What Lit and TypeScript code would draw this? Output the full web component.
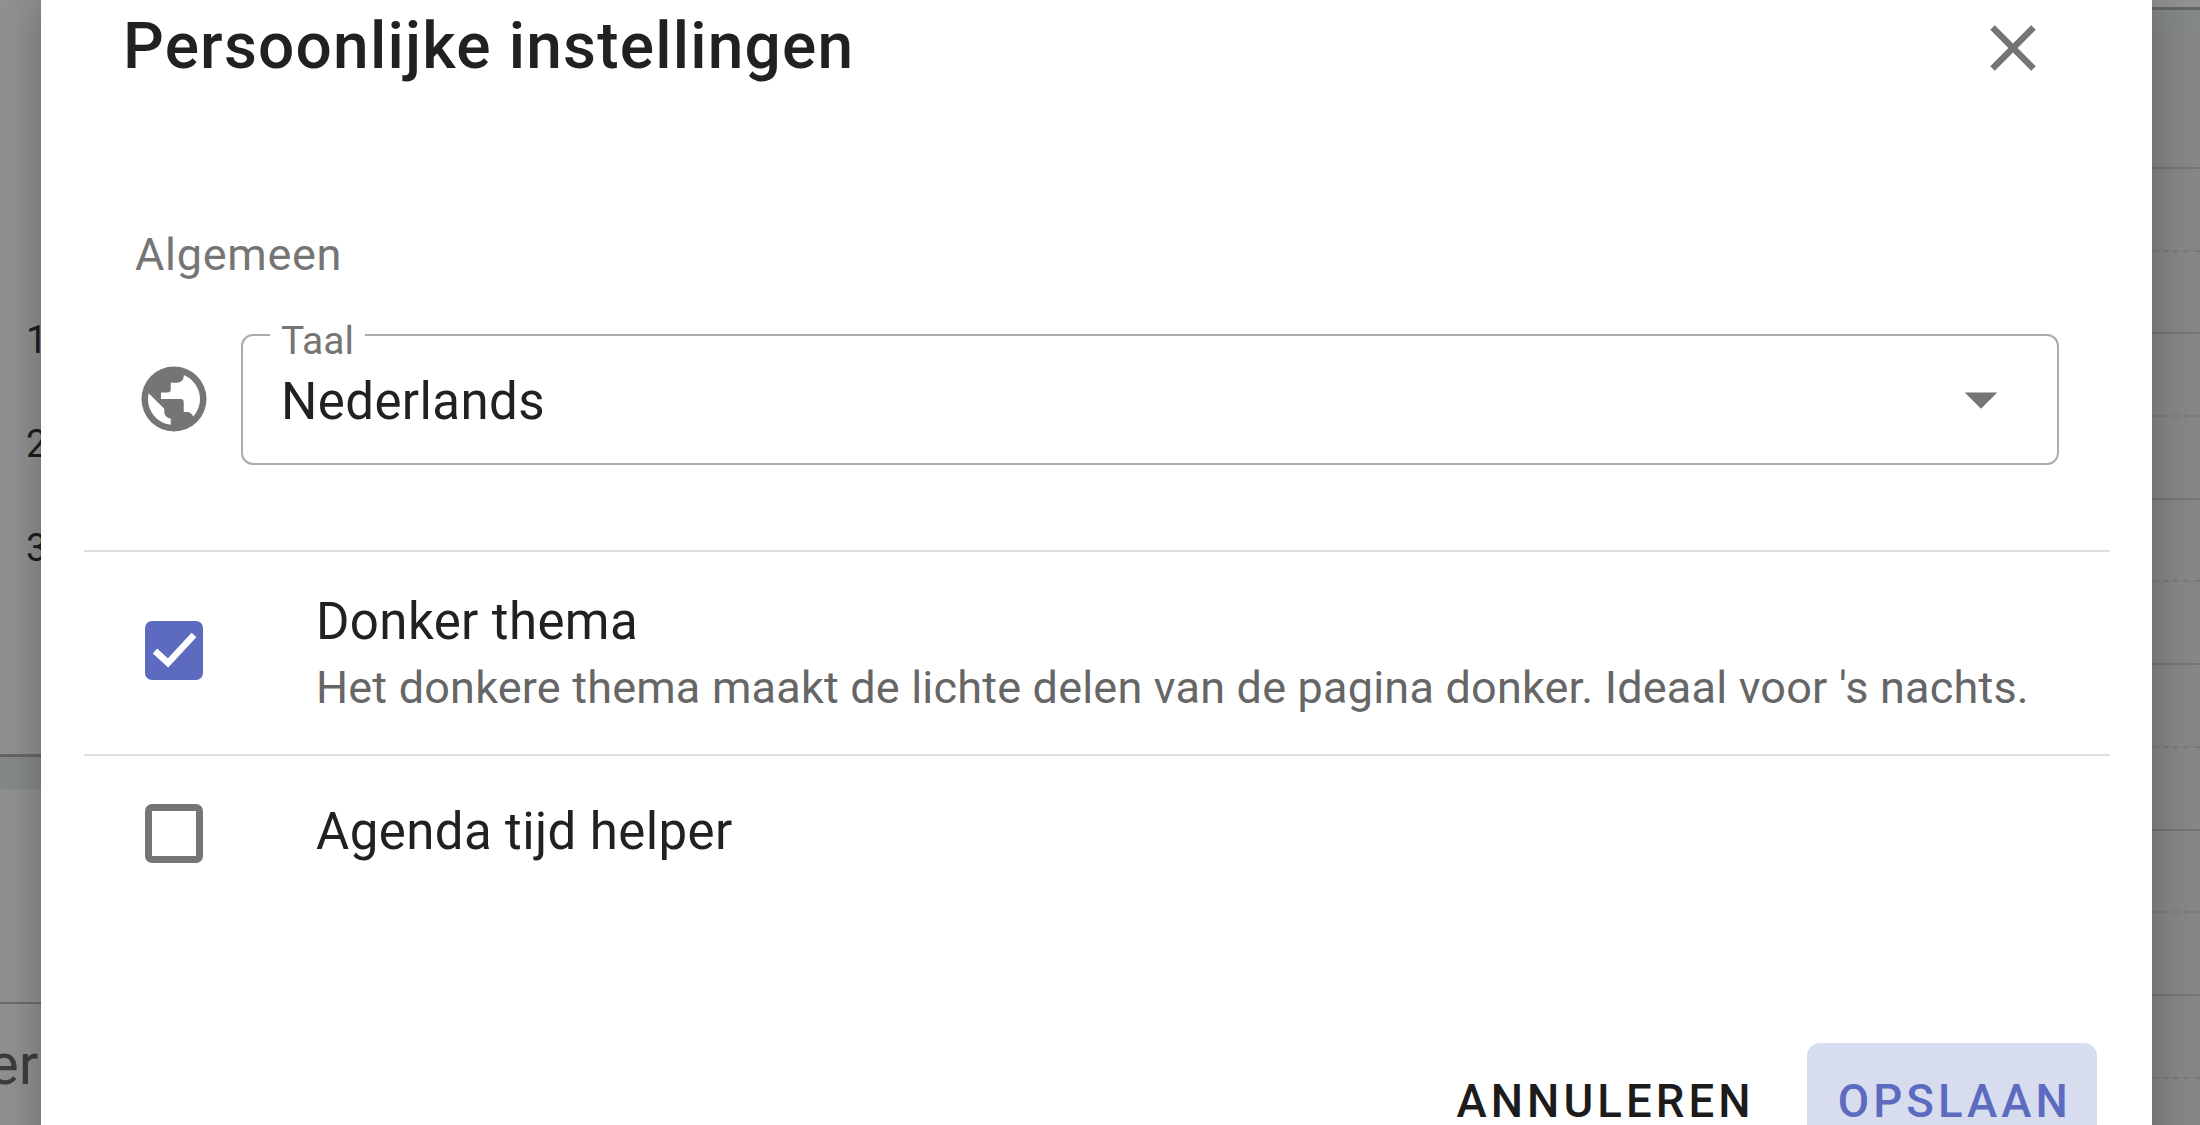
import { LitElement, html, css } from "lit";
import { customElement } from "lit/decorators.js";

@customElement("app-root")
export class AppRoot extends LitElement {
  static styles = css`
    :host {
      display: block;
      position: relative;
      width: 2200px;
      height: 1125px;
      overflow: hidden;
      background: #8a8a8a;
      font-family: Roboto, "Noto Sans", sans-serif;
    }
    .backdrop { display: flex; height: 1125px; }
    .left { width: 41px; background: #919191; overflow: hidden; display: flex; flex-direction: column; }
    .hours { padding-top: 288px; height: 757px; box-sizing: border-box; flex: none; border-bottom: 3px solid #666; }
    .hour { height: 104px; line-height: 104px; font-size: 38px; color: #1d1d1d; padding-left: 26px; }
    .band { height: 32px; flex: none; background: #858a87; }
    .spacer-left { height: 213px; flex: none; border-bottom: 2px solid #6c6c6c; }
    .cut { font-size: 58px; line-height: 120px; color: #3d3d3d; margin-left: -12px; white-space: nowrap; }
    .middle { flex: 1; }
    .right { width: 48px; background: #878787; display: flex; flex-direction: column; overflow: hidden; }
    .head { height: 7px; flex: none; background: #929292; border-bottom: 3px solid #666; }
    .head-band { height: 20px; flex: none; background: #848886; }
    .first { height: 137px; flex: none; border-bottom: 2px solid #757575; }
    .half { height: 80.7px; flex: none; border-bottom: 2px dashed #7a7a7a; }
    .full { height: 80.7px; flex: none; border-bottom: 2px solid #757575; }

    .modal {
      position: absolute;
      left: 41px;
      top: 0;
      width: 2111px;
      background: #fff;
      box-shadow: 0 0 42px rgba(0, 0, 0, 0.28);
      display: flex;
      flex-direction: column;
      color: #212121;
    }
    .title-row { display: flex; justify-content: space-between; align-items: center; height: 94px; padding: 0 100px 0 82px; }
    .title { font-size: 64px; font-weight: 500; letter-spacing: 1.2px; line-height: 92px; }
    .close { margin-top: 2px; }
    svg { display: block; flex: none; }
    .icon-fill { fill: #757575; }
    .section { font-size: 45px; color: #757575; padding: 129px 0 0 94px; line-height: 64px; letter-spacing: 0.7px; }
    .select-row { display: flex; align-items: flex-start; gap: 28px; padding: 21px 93px 0 94px; }
    .globe { margin-top: 52px; }
    fieldset {
      flex: 1;
      margin: 0;
      padding: 0;
      height: 157px;
      box-sizing: border-box;
      border: 2px solid #ababab;
      border-radius: 12px;
      min-width: 0;
    }
    legend { margin-left: 27px; padding: 14px 11px 0; font-size: 39px; line-height: 39px; color: #757575; }
    .value { display: flex; align-items: center; justify-content: space-between; padding: 0 37px 0 38px; height: 81px; font-size: 51px; color: #212121; letter-spacing: 0.4px; }
    .arrow { margin-bottom: 6px; }
    .divider { height: 2px; background: #e0e0e0; margin: 0 42px 0 43px; }
    .divider.one { margin-top: 85px; }
    .option { display: flex; padding-left: 104px; gap: 113px; }
    .option.first-option { height: 202px; align-items: center; }
    .option.second-option { height: 287px; padding-top: 48px; box-sizing: border-box; align-items: flex-start; }
    .box { width: 58px; height: 59px; box-sizing: border-box; border-radius: 7px; flex: none; }
    .box.on { background: #5c6bc0; margin-bottom: 6px; }
    .box.off { border: 7px solid #757575; }
    .texts { padding-top: 3px; }
    .label { font-size: 51px; line-height: 64px; color: #212121; letter-spacing: 0.4px; }
    .second-option .label { margin-top: -4px; }
    .desc { font-size: 45px; line-height: 62px; color: #666; letter-spacing: 0.2px; white-space: nowrap; margin-top: 3px; }
    .actions { display: flex; justify-content: flex-end; align-items: center; padding-right: 55px; gap: 27px; }
    .btn { font-size: 45.5px; font-weight: 500; letter-spacing: 4.1px; height: 117px; line-height: 117px; padding: 0 25px 0 31px; border-radius: 13px; }
    .btn.ghost { color: #1c1c1c; }
    .btn.primary { color: #5c6bc0; background: #d7dcee; }
  `;

  render() {
    const rows = [0, 1, 2, 3, 4, 5];
    return html`
      <div class="backdrop">
        <div class="left">
          <div class="hours">
            ${["1", "2", "3"].map((h) => html`<div class="hour">${h}</div>`)}
          </div>
          <div class="band"></div>
          <div class="spacer-left"></div>
          <div class="cut">er</div>
        </div>
        <div class="middle"></div>
        <div class="right">
          <div class="head"></div>
          <div class="head-band"></div>
          <div class="first"></div>
          ${rows.map(() => html`<div class="half"></div><div class="full"></div>`)}
        </div>
      </div>

      <div class="modal">
        <div class="title-row">
          <div class="title">Persoonlijke instellingen</div>
          <svg class="close" width="78" height="78" viewBox="0 0 24 24"><path class="icon-fill" d="M19 6.41 17.59 5 12 10.59 6.41 5 5 6.41 10.59 12 5 17.59 6.41 19 12 13.41 17.59 19 19 17.59 13.41 12z"/></svg>
        </div>
        <div class="section">Algemeen</div>
        <div class="select-row">
          <svg class="globe" width="78" height="78" viewBox="0 0 24 24"><path class="icon-fill" d="M17.9 17.39C17.64 16.59 16.89 16 16 16h-1v-3a1 1 0 0 0-1-1H8v-2h2a1 1 0 0 0 1-1V7h2a2 2 0 0 0 2-2v-.41C17.93 5.77 20 8.64 20 12c0 2.08-.8 3.97-2.1 5.39M11 19.93C7.05 19.44 4 16.08 4 12c0-.62.08-1.22.21-1.79L9 15v1a2 2 0 0 0 2 2M12 2A10 10 0 0 0 2 12a10 10 0 0 0 10 10 10 10 0 0 0 10-10A10 10 0 0 0 12 2z"/></svg>
          <fieldset>
            <legend>Taal</legend>
            <div class="value">
              <span>Nederlands</span>
              <svg class="arrow" width="78" height="78" viewBox="0 0 24 24"><path class="icon-fill" d="M7 10l5 5 5-5z"/></svg>
            </div>
          </fieldset>
        </div>
        <div class="divider one"></div>
        <div class="option first-option">
          <div class="box on">
            <svg width="58" height="59" viewBox="0 0 58 59"><path fill="none" stroke="#fff" stroke-width="6.5" d="M10 30 23 42 49 14"/></svg>
          </div>
          <div class="texts">
            <div class="label">Donker thema</div>
            <div class="desc">Het donkere thema maakt de lichte delen van de pagina donker. Ideaal voor 's nachts.</div>
          </div>
        </div>
        <div class="divider"></div>
        <div class="option second-option">
          <div class="box off"></div>
          <div class="label">Agenda tijd helper</div>
        </div>
        <div class="actions">
          <div class="btn ghost">ANNULEREN</div>
          <div class="btn primary">OPSLAAN</div>
        </div>
      </div>
    `;
  }
}
